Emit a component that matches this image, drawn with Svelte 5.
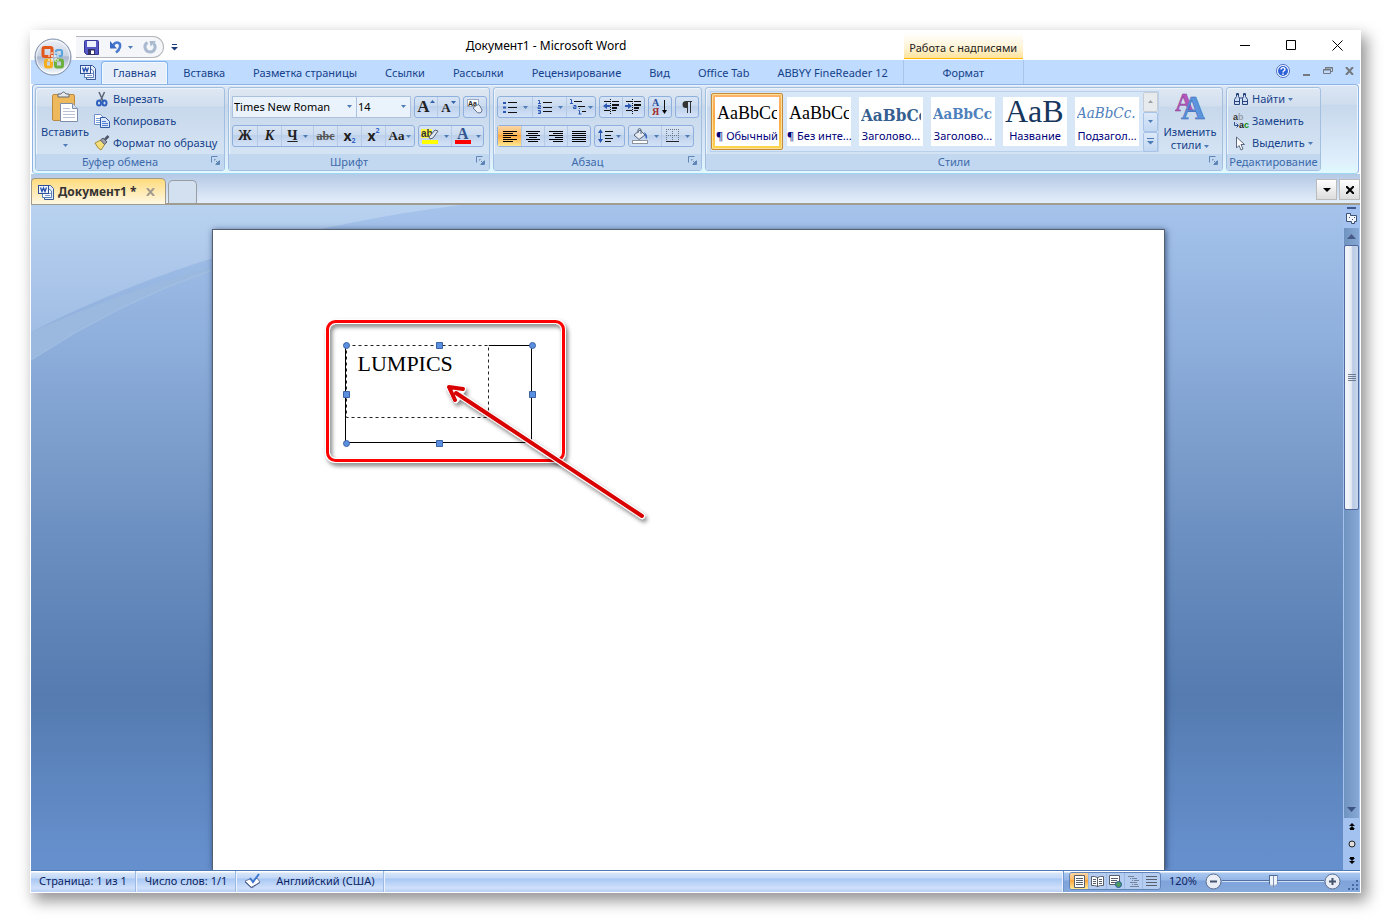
<script lang="ts">
	type Style = { name: string; sample: string; kind: string };

	const tabs = [
		'Главная',
		'Вставка',
		'Разметка страницы',
		'Ссылки',
		'Рассылки',
		'Рецензирование',
		'Вид',
		'Office Tab',
		'ABBYY FineReader 12'
	];

	const styles: Style[] = [
		{ name: '¶ Обычный', sample: 'AaBbCс', kind: 'normal' },
		{ name: '¶ Без инте...', sample: 'AaBbCс', kind: 'normal' },
		{ name: 'Заголово...', sample: 'AaBbCc', kind: 'h1' },
		{ name: 'Заголово...', sample: 'AaBbCc', kind: 'h2' },
		{ name: 'Название', sample: 'AaB', kind: 'title' },
		{ name: 'Подзагол...', sample: 'AaBbCc.', kind: 'sub' }
	];

	const views = ['Разметка', 'Чтение', 'Веб-документ', 'Структура', 'Черновик'];
	const aligns = ['left', 'center', 'right', 'justify'];

	let activeTab = $state('Главная');
	let activeStyle = $state(0);
	let align = $state('left');
	let view = $state(0);
	let zoom = $state(50);

	const alignPath = (kind: string) => {
		const widths = kind == 'justify' ? [14, 14, 14, 14, 14, 14] : [14, 10, 14, 8, 14, 10];
		return widths
			.map((w, i) => {
				const x = kind == 'right' ? 15 - w : kind == 'center' ? 8 - w / 2 : 1;
				return `M${x} ${2.5 + i * 2}h${w}`;
			})
			.join('');
	};
</script>

{#snippet arrow()}
	<svg class="arrow" width="5" height="3" viewBox="0 0 5 3"><path d="M0 0h5L2.5 3z" /></svg>
{/snippet}

{#snippet launcher()}
	<button class="launcher" aria-label="Параметры">
		<svg width="9" height="9" viewBox="0 0 9 9" fill="none" stroke="#5f86b5">
			<path d="M.5 6.500V.5h6" />
			<path d="M3.500 4.500v-1h1M5 5l3 3M8.500 4.500v4h-4" />
			<path d="M8 5v3H5z" fill="#5f86b5" />
		</svg>
	</button>
{/snippet}

{#snippet wordIcon()}
	<svg width="16" height="16" viewBox="0 0 16 16">
		<path d="M6.500 1.500h6l3 3v11h-9z" fill="#e3ecfa" stroke="#3a5a97" />
		<path d="M4.500 4.500h6l3 2.500v6.500h-9z" fill="#f7faff" stroke="#5b7db8" />
		<path d="M11 9.500h2M7 11.500h5" stroke="#7a98ca" />
		<rect x=".5" y="1.500" width="10" height="8" fill="#eef3fc" stroke="#2c4f96" />
		<path d="M2.500 3.500l1.500 4 1.500-3.500 1.500 3.500 1.500-4" fill="none" stroke="#2450ad" stroke-width="1.300" />
	</svg>
{/snippet}

<div class="desktop">
	<div class="window">
		<header class="titlebar">
			<div class="qat">
				<button aria-label="Сохранить">
					<svg width="15" height="15" viewBox="0 0 15 15">
						<path d="M.5 1.500q0-1 1-1h12q1 0 1 1v13H2.500l-2-2z" fill="#5558c4" stroke="#363796" />
						<path d="M3 1h9v6H3z" fill="#edf1fb" />
						<path d="M4 9h7v6H4z" fill="#303063" />
						<path d="M7 10.500h3V14H7z" fill="#fff" />
					</svg>
				</button>
				<button class="undo" aria-label="Отменить">
					<svg width="14" height="14" viewBox="0 0 14 14">
						<path d="M4 5.500C7 1 12 2 11 7c-.5 2.500-2 4-4 5.500" fill="none" stroke="#4879cf" stroke-width="2.500" />
						<path d="M1 1v7.500h7z" fill="#3c6bc4" />
					</svg>
					{@render arrow()}
				</button>
				<button aria-label="Повторить">
					<svg width="14" height="14" viewBox="0 0 14 14">
						<path d="M4.500 2.500C0 5 2 12 7 12s6.500-6 3.500-8.500" fill="none" stroke="#a9b9cf" stroke-width="3" />
						<path d="M6.500 1H13L7.500 6.500z" fill="#a9b9cf" />
					</svg>
				</button>
			</div>
			<button class="qat-more" aria-label="Настройка панели">
				<svg width="7" height="7" viewBox="0 0 7 7"><path d="M1 0h5v1H1zM0 3h7L3.500 6.500z" fill="#1f3e7d" /></svg>
			</button>
			<h1>Документ1 - Microsoft Word</h1>
			<div class="controls">
				<button aria-label="Свернуть">
					<svg width="11" height="11" viewBox="0 0 11 11"><path d="M0 5.500h10" stroke="#000" /></svg>
				</button>
				<button aria-label="Развернуть">
					<svg width="11" height="11" viewBox="0 0 11 11"><path d="M.5.5h9v9h-9z" fill="none" stroke="#000" /></svg>
				</button>
				<button aria-label="Закрыть">
					<svg width="11" height="11" viewBox="0 0 11 11"><path d="M.5.5l10 10M10.500.5l-10 10" stroke="#000" /></svg>
				</button>
			</div>
			<button class="office" aria-label="Office">
				<svg width="38" height="38" viewBox="0 0 38 38">
					<defs>
						<linearGradient id="orb" x2="0" y2="1">
							<stop offset="0" stop-color="#eef1f7" />
							<stop offset=".47" stop-color="#c9d2e2" />
							<stop offset=".5" stop-color="#a9b6cf" />
							<stop offset="1" stop-color="#fafdff" />
						</linearGradient>
					</defs>
					<circle cx="19" cy="19" r="18" fill="url(#orb)" stroke="#7e8da9" />
					<circle cx="19" cy="19" r="16.500" fill="none" stroke="#fff" opacity=".7" />
					<g fill="none" stroke-width="3">
						<rect x="9" y="9.500" width="9" height="9" rx="1.500" stroke="#e2571b" />
						<rect x="22" y="12" width="6" height="6" rx="1.500" stroke="#5aa5dc" stroke-width="2.200" />
						<rect x="11.500" y="22" width="6" height="7" rx="1.500" stroke="#f5ae1e" />
						<rect x="21.500" y="22" width="7" height="7" rx="1.500" stroke="#6cb13f" />
					</g>
					<path d="M18 14v10M22 14v10M14 18h12M14 22h12" stroke="#fff" stroke-dasharray="2 1" />
				</svg>
			</button>
		</header>

		<nav class="tabs">
			<button class="word" aria-label="Word">{@render wordIcon()}</button>
			{#each tabs as tab}
				<button class="tab" class:active={tab == activeTab} onclick={() => (activeTab = tab)}>{tab}</button>
			{/each}
			<div class="context">
				<span class="context-title">Работа с надписями</span>
				<button class="context-tab">Формат</button>
			</div>
			<div class="doc-controls">
				<button aria-label="Справка">
					<svg width="14" height="14" viewBox="0 0 14 14">
						<circle cx="7" cy="7" r="6.500" fill="#fff" stroke="#4b6fc0" />
						<circle cx="7" cy="7" r="5" fill="#2c61d8" />
						<path d="M5 5.500c0-2.500 4-2.500 4 0C9 7 7 6.500 7 8.500M7 9.500v1.500" fill="none" stroke="#fff" stroke-width="1.400" />
					</svg>
				</button>
				<button aria-label="Свернуть окно">
					<svg width="9" height="10" viewBox="0 0 9 10"><path d="M1 9h7" stroke="#75787d" stroke-width="2" /></svg>
				</button>
				<button aria-label="Восстановить окно">
					<svg width="10" height="8" viewBox="0 0 10 8" fill="none" stroke="#75787d">
						<path d="M2.500 3V.5h7v4H7.500M2 1h8" /><path d="M.5 2.500h7v4h-7zM0 3h8" />
					</svg>
				</button>
				<button aria-label="Закрыть документ">
					<svg width="9" height="8" viewBox="0 0 9 8"><path d="M1 0l7 8M8 0L1 8" stroke="#75787d" stroke-width="2" /></svg>
				</button>
			</div>
		</nav>

		<div class="ribbon">
			<section class="group clipboard">
				<div class="body">
					<button class="big">
						<svg width="28" height="32" viewBox="0 0 28 32">
							<rect x="1.500" y="3.500" width="22" height="26" rx="1.500" fill="#eeb95c" stroke="#bd8b3e" />
							<path d="M7 6V3h3q2.500-4 5 0h3v3z" fill="#e4e7ec" stroke="#636973" />
							<path d="M9.500 12.500h12l5 5v13h-17z" fill="#fff" stroke="#7d8eaa" />
							<path d="M21.500 12.500v5h5" fill="#d5deeb" stroke="#7d8eaa" />
							<path d="M12 17.500h7M12 20.500h12M12 23.500h12M12 26.500h12" stroke="#b9c3d3" />
						</svg>
						<span>Вставить</span>
						{@render arrow()}
					</button>
					<div class="list">
						<button>
							<svg width="16" height="16" viewBox="0 0 16 16" fill="none">
								<path d="M5 1l4.500 10M10.500 1L6 11" stroke="#5b6576" stroke-width="1.500" />
								<ellipse cx="5" cy="12" rx="2" ry="2.500" stroke="#2d5fbd" stroke-width="2" />
								<ellipse cx="10.500" cy="12" rx="2" ry="2.500" stroke="#2d5fbd" stroke-width="2" />
							</svg>
							Вырезать
						</button>
						<button>
							<svg width="16" height="16" viewBox="0 0 16 16">
								<path d="M.5 1.500h6l3 3v7h-9z" fill="#fff" stroke="#6c8fc9" />
								<path d="M2 5.500h4M2 7.500h4M2 9.500h4" stroke="#7b9fd8" />
								<path d="M6.500 4.500h5l4 4v6h-9z" fill="#dbe7fa" stroke="#2e59a5" />
								<path d="M8 8.500h4M8 10.500h6M8 12.500h6" stroke="#4b7bd0" />
							</svg>
							Копировать
						</button>
						<button>
							<svg width="16" height="16" viewBox="0 0 16 16">
								<path d="M1 8l6-3 4 4-4 6q-3-1-6-7z" fill="#f4de7c" stroke="#a48a36" />
								<path d="M6.500 5L9 3l4 4-2.500 2.500z" fill="#9a9eac" stroke="#5a5e6c" />
								<path d="M11 4.500l3.500-3.500" stroke="#4e5568" stroke-width="2.500" />
							</svg>
							Формат по образцу
						</button>
					</div>
				</div>
				<h2>Буфер обмена{@render launcher()}</h2>
			</section>

			<section class="group font">
				<div class="body rows">
					<div class="row">
						<div class="combos">
							<label class="combo family">
								<select aria-label="Шрифт"><option>Times New Roman</option><option>Arial</option></select>
								{@render arrow()}
							</label>
							<label class="combo size">
								<select aria-label="Размер шрифта"><option>14</option><option>16</option></select>
								{@render arrow()}
							</label>
						</div>
						<div class="set">
							<button class="grow serif" aria-label="Увеличить размер">A<svg width="5" height="3"><path d="M0 3h5L2.500 0z" fill="#3161a8" /></svg></button>
							<button class="shrink serif" aria-label="Уменьшить размер">A<svg width="5" height="3"><path d="M0 0h5L2.500 3z" fill="#3161a8" /></svg></button>
						</div>
						<div class="set">
							<button aria-label="Очистить формат">
								<svg width="18" height="18" viewBox="0 0 18 18">
									<rect x="1.500" y="1.500" width="11" height="7" fill="#fff" stroke="#9babc2" />
									<text x="2" y="8" font-size="7" font-weight="bold" font-family="Liberation Sans" fill="#222">Aa</text>
									<path d="M7 10l4-3q2-1 3 1l2 4q0 3-3 3-2 0-3-2z" fill="#eef2f8" stroke="#68788f" />
								</svg>
							</button>
						</div>
					</div>
					<div class="row lower">
						<div class="set">
							<button class="serif bold">Ж</button>
							<button class="serif bold italic">К</button>
							<button class="serif bold wide"><u>Ч</u>{@render arrow()}</button>
							<button class="serif strike"><s>abc</s></button>
							<button class="bold">x<sub>2</sub></button>
							<button class="bold">x<sup>2</sup></button>
							<button class="serif bold mid case">Aa{@render arrow()}</button>
						</div>
						<div class="set">
							<button class="wide" aria-label="Цвет выделения">
								<svg width="18" height="17" viewBox="0 0 18 17">
									<path d="M0 1h11v9H0z" fill="#fbf63f" />
									<text x="0" y="9" font-size="10" font-weight="bold" font-family="Liberation Sans" fill="#333">ab</text>
									<path d="M8 9l6-7 3 1-5 7-3 1z" fill="#dfe6ef" stroke="#53617b" />
									<path d="M1 12h16v4H1z" fill="#ff0" />
								</svg>
								{@render arrow()}
							</button>
							<button class="wide" aria-label="Цвет текста">
								<svg width="16" height="17" viewBox="0 0 16 17">
									<text x="2" y="11" font-size="16" font-weight="bold" font-family="Liberation Serif" fill="#31558f">A</text>
									<path d="M0 12h16v4H0z" fill="red" />
								</svg>
								{@render arrow()}
							</button>
						</div>
					</div>
				</div>
				<h2>Шрифт{@render launcher()}</h2>
			</section>

			<section class="group para">
				<div class="body rows">
					<div class="row">
						<div class="set lists">
							<button class="wide" aria-label="Маркеры">
								<svg width="15" height="15" viewBox="0 0 15 15">
									<path d="M5 2.500h9M5 7.500h9M5 12.500h9" stroke="#111" />
									<path d="M0 2h3v2H0zM0 6.500h3v2H0zM0 11h3v2H0z" fill="#2c58b4" />
								</svg>
								{@render arrow()}
							</button>
							<button class="wide" aria-label="Нумерация">
								<svg width="16" height="16" viewBox="0 0 16 16">
									<path d="M6 3.500h9M6 8.500h9M6 12.500h9" stroke="#111" />
									<path d="M1 1.500h1.500V4M1 4.500h3M1 6.500h2.500v1.500H1v1.500h3M1 11.500h2.500v3H1M1.500 13h2" fill="none" stroke="#2c58b4" />
								</svg>
								{@render arrow()}
							</button>
							<button class="mid" aria-label="Многоуровневый список">
								<svg width="17" height="16" viewBox="0 0 17 16">
									<path d="M5 2.500h8M9 7.500h7M13 12.500h4" stroke="#111" />
									<path d="M1 .5h1.500V4M1 4.500h3M4.500 6.500h2.500v3H4.500V8h2.500M10.500 9v1M9.500 11.500h1V15M9.500 15h3" fill="none" stroke="#2c58b4" />
								</svg>
								{@render arrow()}
							</button>
						</div>
						<div class="set">
							<button aria-label="Уменьшить отступ">
								<svg width="17" height="16" viewBox="0 0 17 16">
									<path d="M1 2.500h6M9 2.500h7M1 11.500h6M9 11.500h4" stroke="#111" />
									<path d="M9 5h7v2H9zM9 8h5v2H9z" fill="#111" />
									<path d="M7.500 0v16" stroke="#111" stroke-dasharray="1 1" />
									<path d="M0 7l4-3v2h3v2H4v2z" fill="#2c58b4" />
								</svg>
							</button>
							<button aria-label="Увеличить отступ">
								<svg width="17" height="16" viewBox="0 0 17 16">
									<path d="M1 2.500h6M9 2.500h7M1 11.500h6M9 11.500h4" stroke="#111" />
									<path d="M9 5h7v2H9zM9 8h5v2H9z" fill="#111" />
									<path d="M7.500 0v16" stroke="#111" stroke-dasharray="1 1" />
									<path d="M7 7L3 4v2H0v2h3v2z" fill="#2c58b4" />
								</svg>
							</button>
						</div>
						<div class="set">
							<button aria-label="Сортировка">
								<svg width="16" height="18" viewBox="0 0 16 18">
									<text x="0" y="8" font-size="10" font-weight="bold" font-family="Liberation Serif" fill="#2c4f9c">А</text>
									<text x="0" y="17" font-size="10" font-weight="bold" font-family="Liberation Serif" fill="#a02c2c">Я</text>
									<path d="M12.500 2v12" stroke="#111" /><path d="M10 12h5l-2.500 4z" />
								</svg>
							</button>
						</div>
						<div class="set">
							<button aria-label="Знаки абзаца">
								<svg width="12" height="14" viewBox="0 0 12 14">
									<path d="M11 1H5a3.500 3.500 0 0 0 0 7h1V1z" fill="#333" /><path d="M6.500 1v12M9.500 1v12M5 1.500h6" stroke="#333" />
								</svg>
							</button>
						</div>
					</div>
					<div class="row lower">
						<div class="set">
							{#each aligns as kind}
								<button class:pressed={align == kind} aria-label={kind} onclick={() => (align = kind)}>
									<svg width="16" height="15" viewBox="0 0 16 15"><path d={alignPath(kind)} stroke="#000" /></svg>
								</button>
							{/each}
						</div>
						<div class="set">
							<button class="mid" aria-label="Интервал">
								<svg width="16" height="16" viewBox="0 0 16 16">
									<path d="M7 3.500h8M7 7.500h6M7 10.500h8M7 13.500h6" stroke="#111" />
									<path d="M2.500 3v10" stroke="#2c58b4" /><path d="M0 5l2.500-4L5 5zM0 11l2.500 4L5 11z" fill="#2c58b4" />
								</svg>
								{@render arrow()}
							</button>
						</div>
						<div class="set">
							<button class="wide" aria-label="Заливка">
								<svg width="17" height="17" viewBox="0 0 17 17">
									<path d="M2 7l6-5 5 5-6 4.500z" fill="#e6ebf2" stroke="#55627b" /><path d="M6 5V1.500q1.500-2 3 0V6" fill="none" stroke="#55627b" />
									<path d="M12 4q4 2 3 7-2-1-2-4z" fill="#3a6ac4" />
									<rect x=".5" y="12.500" width="15" height="3" fill="#fff" stroke="#8c949e" />
								</svg>
								{@render arrow()}
							</button>
							<button class="wide" aria-label="Границы">
								<svg width="14" height="14" viewBox="0 0 14 14">
									<path d="M0 .5h13M0 6.500h13M.5 0v12M6.500 0v12M12.500 0v12" stroke="#6b7484" stroke-dasharray="1 1" />
									<path d="M0 12.500h13" stroke="#222" />
								</svg>
								{@render arrow()}
							</button>
						</div>
					</div>
				</div>
				<h2>Абзац{@render launcher()}</h2>
			</section>

			<section class="group styles">
				<div class="body">
					<div class="gallery">
						{#each styles as s, i}
							<button class="style" class:chosen={i == activeStyle} onclick={() => (activeStyle = i)}>
								<span class="tile"><span class="sample {s.kind}">{s.sample}</span><span class="name">{s.name}</span></span>
							</button>
						{/each}
						<div class="scroller">
							<button class="off" aria-label="Вверх"><svg width="5" height="3"><path d="M0 3h5L2.500 0z" fill="#a0a0a0" /></svg></button>
							<button aria-label="Вниз">{@render arrow()}</button>
							<button aria-label="Ещё"><svg width="7" height="7"><path d="M0 0h7v1H0zM0 3h7L3.500 6.500z" fill="#4e7cb6" /></svg></button>
						</div>
					</div>
					<button class="big change">
						<svg width="30" height="30" viewBox="0 0 30 30">
							<text x="0" y="20" font-size="26" font-weight="bold" font-family="Liberation Serif" fill="#b557bb" stroke="#883d93" stroke-width=".5">A</text>
							<text x="6" y="28" font-size="34" font-weight="bold" font-family="Liberation Serif" fill="#5d94de" stroke="#2d60ad" stroke-width=".5">A</text>
						</svg>
						<span>Изменить<br />стили {@render arrow()}</span>
					</button>
				</div>
				<h2>Стили{@render launcher()}</h2>
			</section>

			<section class="group editing">
				<div class="body">
					<div class="list">
						<button>
							<svg width="16" height="14" viewBox="0 0 16 14" fill="#cddcf3" stroke="#27437e">
								<path d="M3.500 1.500h2v3l1 2v6h-5v-5l2-3zM10.500 1.500h2v3l2 3v5h-5v-6l1-2z" /><path d="M6 6h4M2 9.500h4M10 9.500h4M3 2.500h3M10 2.500h3" />
							</svg>
							Найти {@render arrow()}
						</button>
						<button>
							<svg width="16" height="16" viewBox="0 0 16 16" font-family="Liberation Sans" font-weight="bold" font-size="9">
								<text x="0" y="7" fill="#333">a<tspan fill="#9aa0aa">b</tspan></text>
								<text x="6" y="15" fill="#222">a<tspan fill="#139013">c</tspan></text>
								<path d="M1.500 9v3.500H5M3.500 10.500l2 2-2 2" fill="none" stroke="#2d4f91" />
							</svg>
							Заменить
						</button>
						<button>
							<svg width="16" height="15" viewBox="0 0 16 15"><path d="M3.500 1v11l2.500-2.500 2 4.500 2-1-2-4.500h3.500z" fill="#fff" stroke="#596880" /></svg>
							Выделить {@render arrow()}
						</button>
					</div>
				</div>
				<h2>Редактирование</h2>
			</section>
		</div>

		<div class="doctabs">
			<div class="doctab">
				{@render wordIcon()}
				<b>Документ1 *</b>
				<button aria-label="Закрыть вкладку"><svg width="9" height="8" viewBox="0 0 9 8"><path d="M1 0l7 8M8 0L1 8" stroke="#a39b8f" stroke-width="2" /></svg></button>
			</div>
			<button class="newtab" aria-label="Новая вкладка"></button>
			<div class="tabtools">
				<button aria-label="Список вкладок"><svg width="8" height="4"><path d="M0 0h8L4 4z" /></svg></button>
				<button aria-label="Закрыть"><svg width="8" height="8" viewBox="0 0 8 8"><path d="M0 0l8 8M8 0L0 8" stroke="#000" stroke-width="2" /></svg></button>
			</div>
		</div>

		<main class="workspace">
			<svg class="swoosh" width="430" height="170" viewBox="0 0 430 170">
				<defs>
					<linearGradient id="sky" x2="0" y2="1">
						<stop offset="0" stop-color="#b9d2f0" />
						<stop offset="1" stop-color="#a0bde4" />
					</linearGradient>
				</defs>
				<path d="M0 0h430Q190 30 0 127z" fill="url(#sky)" />
				<path d="M0 127Q90 87 181 62v5Q90 96 0 155z" fill="#9bb9df" />
				<path d="M0 155Q90 96 181 65" fill="none" stroke="#a5c0e5" />
			</svg>
			<div class="canvas">
				<article class="page">
					<p class="text">LUMPICS</p>
					<svg class="marks" width="350" height="220" viewBox="310 310 350 220">
						<defs>
							<filter id="drop" x="-10%" y="-10%" width="125%" height="130%">
								<feDropShadow dx="2" dy="3" stdDeviation="2" flood-opacity=".5" />
							</filter>
						</defs>
						<path d="M345.500 345.500h186v97h-186z" fill="none" stroke="#000" />
						<path d="M346.500 345.500h142v72h-142z" fill="none" stroke="#fff" />
						<path d="M345.500 345v98" stroke="#000" />
						<path d="M346.500 345.500h142v72h-142z" fill="none" stroke="#222" stroke-dasharray="3 3" />
						<g fill="#5b8fe0" stroke="#3c64a4">
							<circle cx="346.500" cy="345.500" r="3" /><circle cx="532.500" cy="345.500" r="3" /><circle cx="346.500" cy="443.500" r="3" />
							<path d="M436.500 342.500h6v6h-6zM343.500 391.500h6v6h-6zM529.500 391.500h6v6h-6zM436.500 440.500h6v6h-6z" />
						</g>
						<g fill="none" stroke-linecap="round" stroke-linejoin="round">
							<g filter="url(#drop)">
								<rect x="327.500" y="321.500" width="236" height="139" rx="8" stroke="#fff" stroke-width="5" />
								<rect x="327.500" y="321.500" width="236" height="139" rx="8" stroke="#f00" stroke-width="3" />
							</g>
							<g filter="url(#drop)">
								<path d="M642 516L456 393M456 400l-7-13 14 2z" stroke="#fff" stroke-width="6" />
								<path d="M642 516L456 393M455 400l-6-13 14 2" stroke="#d90000" stroke-width="4" />
							</g>
						</g>
					</svg>
				</article>
			</div>
			<aside class="scrollbar">
				<button class="split" aria-label="Разделить"></button>
				<button class="ruler" aria-label="Линейка">
					<svg width="13" height="13" viewBox="0 0 13 13" fill="#f2f5fa" stroke="#3d5174"><path d="M1.500 1.500h4v2h6v6h-2v2h-3v-2h-5z" /><path d="M4 5.500h1M7 7.500h1M9 5.500h1" /></svg>
				</button>
				<div class="track">
					<button aria-label="Вверх"><svg width="9" height="5"><path d="M0 5h9L4.500 0z" fill="#4a5a86" /></svg></button>
					<div class="thumb"><i></i></div>
					<button class="down" aria-label="Вниз"><svg width="9" height="5"><path d="M0 0h9L4.500 5z" fill="#3d5384" /></svg></button>
				</div>
				<button aria-label="Предыдущая страница"><svg width="6" height="7"><path d="M0 3h6L3 0zM0 6h6L3 3zM1 6h4v1H1z" /></svg></button>
				<button aria-label="Объект перехода"><svg width="8" height="8"><circle cx="4" cy="4" r="3" fill="#ddd" stroke="#222" /></svg></button>
				<button aria-label="Следующая страница"><svg width="6" height="7"><path d="M0 1h6L3 4zM0 4h6L3 7zM1 0h4v1H1z" /></svg></button>
			</aside>
		</main>

		<footer class="status">
			<button>Страница: 1 из 1</button>
			<button class="words">Число слов: 1/1</button>
			<button class="lang">
				<svg width="17" height="16" viewBox="0 0 17 16">
					<path d="M1 8l5-2 3 2 4-3 3 4-8 6z" fill="#fff" stroke="#6577a2" /><path d="M1 9l6 5.500 9-5" fill="none" stroke="#4b5f94" />
					<path d="M6 5l3 4 6-8" fill="none" stroke="#4077cf" stroke-width="2" />
				</svg>
				Английский (США)
			</button>
			<div class="right">
				<div class="views">
					{#each views as v, i}
						<button class:pressed={view == i} aria-label={v} onclick={() => (view = i)}>
							<svg width="13" height="13" viewBox="0 0 13 13" fill="none" stroke="#59606d">
								{#if i == 0}
									<path d="M1.500.5h10v12h-10z" fill="#fff" /><path d="M3 3.500h7M3 5.500h7M3 7.500h7M3 9.500h7" />
								{:else if i == 1}
									<path d="M.5 1.500h3l3 1 3-1h3v9h-3l-3 1-3-1h-3zM6.500 2v10" fill="#fff" /><path d="M2 4.500h3M2 6.500h3M2 8.500h3M8 4.500h3M8 6.500h3M8 8.500h3" />
								{:else if i == 2}
									<path d="M.5.5h10v9H.5z" fill="#fff" /><path d="M2 3.500h7M2 5.500h6M2 7.500h5" /><circle cx="9.500" cy="9.500" r="3" fill="#4f9b60" stroke="#245b9b" />
								{:else if i == 3}
									<path d="M1 1.500h6M3 3.500h1M5 3.500h5M5 5.500h1M7 5.500h5M3 7.500h7M5 9.500h1M7 9.500h4M3 11.500h9" stroke="#76849d" />
								{:else}
									<path d="M1 1.500h11M1 4.500h11M1 7.500h11M1 10.500h11" />
								{/if}
							</svg>
						</button>
					{/each}
				</div>
				<button class="percent">120%</button>
				<button class="round" aria-label="Уменьшить"><svg width="17" height="17"><circle cx="8.500" cy="8.500" r="7.500" fill="#e9eef6" stroke="#5d6f8e" /><path d="M5 8.500h7" stroke="#44536d" stroke-width="2" /></svg></button>
				<input type="range" aria-label="Масштаб" bind:value={zoom} />
				<button class="round" aria-label="Увеличить"><svg width="17" height="17"><circle cx="8.500" cy="8.500" r="7.500" fill="#e9eef6" stroke="#5d6f8e" /><path d="M5 8.500h7M8.500 5v7" stroke="#44536d" stroke-width="2" /></svg></button>
				<svg class="grip" width="11" height="11"><path d="M8 0h2v2H8zM4 4h2v2H4zM8 4h2v2H8zM0 8h2v2H0zM4 8h2v2H4zM8 8h2v2H8z" fill="#4468a6" /></svg>
			</div>
		</footer>
	</div>
</div>

<style>
	:global(body) {
		margin: 0;
		background: #fff;
	}
	.desktop {
		box-sizing: border-box;
		height: 100vh;
		min-height: 600px;
		padding: 30px;
		font: 11px/14px 'Noto Sans', 'Open Sans', sans-serif;
		color: #15428b;
		overflow: hidden;
	}
	.desktop * {
		box-sizing: border-box;
	}
	button {
		display: flex;
		align-items: center;
		justify-content: center;
		padding: 0;
		border: 0;
		background: none;
		font: inherit;
		color: inherit;
		white-space: nowrap;
	}
	svg {
		flex: none;
		display: block;
	}
	.arrow {
		fill: #4e7cb6;
	}
	.serif {
		font-family: 'Liberation Serif', serif;
	}
	.window {
		display: flex;
		flex-direction: column;
		height: 100%;
		border: solid #fff;
		border-width: 0 1px 1px;
		box-shadow: 5px 7px 14px 1px rgba(0, 0, 0, 0.42);
	}

	/* title bar */
	.titlebar {
		position: relative;
		display: flex;
		align-items: center;
		height: 30px;
		flex: none;
		background: #fff;
		color: #000;
	}
	.qat {
		display: flex;
		align-items: center;
		gap: 10px;
		width: 88px;
		height: 22px;
		margin: 4px 0 0 45px;
		padding-left: 8px;
		border: 1px solid #b4b6bb;
		border-left: 0;
		border-radius: 0 11px 11px 0;
		background: #f5f6f9;
	}
	.undo {
		gap: 5px;
	}
	.qat-more {
		margin: 4px 0 0 7px;
	}
	.titlebar h1 {
		flex: 1;
		margin: 0;
		padding: 2px 326px 0 0;
		text-align: center;
		font-size: 12px;
		font-weight: 400;
		line-height: 16px;
	}
	.controls {
		display: flex;
		gap: 35px;
		padding-right: 17px;
	}
	.office {
		position: absolute;
		left: 3px;
		top: 8px;
		z-index: 2;
	}

	/* ribbon tabs */
	.tabs {
		display: flex;
		height: 24px;
		flex: none;
		padding-left: 49px;
		background: #bfdbff;
	}
	.word {
		padding-right: 5px;
	}
	.tab {
		margin: 1px 2px 0 0;
		padding: 0 13px;
	}
	.tab.active {
		padding: 0 11px;
		margin-right: 2px;
		border: 1px solid #7fb1ee;
		border-bottom: 0;
		border-radius: 4px 4px 0 0;
		background: #e6eefa;
		box-shadow: inset 0 0 0 1px #f2f8ff;
	}
	.context {
		position: relative;
		display: flex;
		width: 121px;
		padding-top: 1px;
		border: 1px solid #a8c4e8;
		border-width: 0 1px;
	}
	.context-title {
		position: absolute;
		left: 0;
		right: 0;
		bottom: 25px;
		height: 26px;
		border-bottom: 1px solid #ffb700;
		background: linear-gradient(#fff, #fff3d3 60%, #ffe39a);
		text-align: center;
		line-height: 30px;
		color: #222;
		white-space: nowrap;
	}
	.context-tab {
		flex: 1;
	}
	.doc-controls {
		display: flex;
		align-items: flex-start;
		gap: 12px;
		margin: 4px 6px 0 auto;
	}
	.doc-controls button {
		height: 14px;
	}

	/* ribbon */
	.ribbon {
		display: flex;
		gap: 3px;
		height: 90px;
		flex: none;
		margin: 0 1px;
		padding: 2px;
		border: 1px solid #8db2e3;
		border-bottom-color: #9ad9f2;
		border-radius: 4px;
		background: linear-gradient(#dbe6f4, #cfdded 22%, #c7d8ec 23%, #dfeefb 85%, #dffaff);
		box-shadow: inset 0 0 0 1px #e9f4fe;
	}
	.ribbon,
	.tabs {
		min-width: 1290px;
	}
	.group {
		display: flex;
		flex-direction: column;
		border: 1px solid #a3bfe0;
		border-radius: 3px;
		background: linear-gradient(#dfe8f4, #d2dfee 22%, #c8d8ec 23%, #d9e8f6);
		box-shadow: inset 1px 1px 0 #ebf3fb;
		overflow: hidden;
	}
	.clipboard {
		width: 190px;
	}
	.font {
		width: 262px;
	}
	.para {
		width: 209px;
	}
	.styles {
		width: 518px;
	}
	.editing {
		width: 95px;
	}
	.body {
		display: flex;
		flex: 1;
		min-height: 0;
	}
	.group h2 {
		position: relative;
		margin: 0;
		height: 16px;
		padding-right: 20px;
		background: #c1d8f0;
		text-align: center;
		font-size: 11px;
		font-weight: 400;
		line-height: 16px;
		color: #3e6aaa;
	}
	.group.editing h2 {
		padding: 0;
	}
	.launcher {
		position: absolute;
		right: 4px;
		top: 2px;
	}
	.big {
		flex-direction: column;
		justify-content: flex-start;
		gap: 2px;
		width: 54px;
		padding-top: 3px;
	}
	.clipboard .big {
		margin-left: 2px;
	}
	.big .arrow {
		margin-top: 3px;
	}
	.list {
		display: flex;
		flex-direction: column;
		padding-left: 2px;
	}
	.list button {
		justify-content: flex-start;
		gap: 3px;
		height: 22px;
	}
	.editing .list {
		padding-left: 6px;
	}
	.rows {
		flex-direction: column;
		gap: 7px;
		padding: 8px 3px 0;
	}
	.row {
		display: flex;
		gap: 3px;
		height: 22px;
	}
	.combos {
		display: flex;
		width: 179px;
		height: 22px;
	}
	.combo {
		position: relative;
		display: flex;
		border: 1px solid #abc1de;
		background: #eaf2fb;
	}
	.combo + .combo {
		margin-left: -1px;
	}
	.family {
		width: 125px;
	}
	.size {
		width: 55px;
	}
	.combo select {
		flex: 1;
		width: 100%;
		padding: 0 1px;
		border: 0;
		appearance: none;
		background: none;
		font: inherit;
		color: #000;
	}
	.combo .arrow {
		position: absolute;
		right: 4px;
		top: 8px;
	}
	.set {
		display: flex;
		border: 1px solid #8fb0dc;
		border-radius: 3px;
		background: linear-gradient(#d7e4f4, #cbdbf0 45%, #bdd0ea 46%, #d3e2f8);
		color: #222;
	}
	.set button {
		width: 22px;
		font-size: 14px;
	}
	.lower .set button {
		width: 24px;
	}
	.para .lower .set button {
		width: 23px;
	}
	.set button + button {
		border-left: 1px solid #b5cae6;
	}
	.row .set button.wide {
		width: 32px;
		gap: 5px;
	}
	.row .lists button.wide {
		width: 34px;
	}
	.row .set button.mid {
		width: 29px;
		gap: 2px;
	}
	.set button.case {
		font-size: 13px;
	}
	.set button.strike {
		font-size: 12px;
		font-weight: 700;
		color: #555;
	}
	.set .grow,
	.set .shrink {
		align-items: flex-start;
		padding-top: 3px;
		font-size: 17px;
		font-weight: 700;
	}
	.set .shrink {
		padding-top: 4px;
		font-size: 13px;
	}
	.bold {
		font-weight: 700;
	}
	.italic {
		font-style: italic;
	}
	sub,
	sup {
		align-self: flex-end;
		font-size: 7px;
		line-height: 10px;
		color: #3161c8;
	}
	sup {
		align-self: flex-start;
	}
	.pressed {
		background: linear-gradient(#fbd6a5, #ffb85d 45%, #fda63c 46%, #ffe893);
	}

	/* style gallery */
	.gallery {
		display: flex;
		align-items: center;
		width: 449px;
		height: 61px;
		margin: 3px 0 0 4px;
		border: 1px solid #b9d0ed;
		background: #d7e7f8;
	}
	.style {
		width: 72px;
		height: 57px;
		border: 4px solid transparent;
	}
	.style.chosen {
		border: 1px solid #c58a38;
		border-radius: 2px;
		background: linear-gradient(#fbb56b, #fca744 40%, #fed54f);
		box-shadow: inset 0 0 0 1px #fbe19b;
	}
	.tile {
		display: flex;
		flex-direction: column;
		width: 64px;
		height: 49px;
		background: #fff;
		text-align: left;
	}
	.sample {
		height: 32px;
		margin: 0 2px;
		overflow: hidden;
		font: 18px/32px 'Liberation Serif', serif;
		color: #000;
	}
	.sample.h1,
	.sample.h2,
	.sample.sub {
		font-family: 'DejaVu Serif Condensed', 'DejaVu Serif', serif;
	}
	.sample.h1 {
		font-size: 17px;
		font-weight: 700;
		line-height: 36px;
		color: #365f91;
	}
	.sample.h2 {
		font-size: 15px;
		font-weight: 700;
		line-height: 34px;
		color: #4f81bd;
	}
	.sample.title {
		font-size: 32px;
		line-height: 28px;
		color: #17365d;
	}
	.sample.sub {
		font-size: 15px;
		font-style: italic;
		color: #4f81bd;
	}
	.name {
		color: #00007b;
		line-height: 14px;
		text-align: center;
	}
	.scroller {
		display: flex;
		flex-direction: column;
		width: 15px;
		height: 60px;
		margin-left: auto;
	}
	.scroller button {
		flex: 1;
		border: 1px solid #a9c3e6;
		border-radius: 2px;
		background: linear-gradient(#dce9f8, #c3d8f2);
	}
	.scroller .off {
		border-color: #c8cdd4;
		background: #e8ebee;
	}
	.change {
		margin-left: 4px;
		gap: 4px;
	}
	.change span {
		line-height: 13px;
	}
	.change .arrow {
		display: inline-block;
		margin: 0;
		vertical-align: middle;
	}

	/* document tabs */
	.doctabs {
		display: flex;
		align-items: flex-end;
		height: 31px;
		flex: none;
		border-bottom: 2px solid #a19c90;
		background: linear-gradient(#b4c9e6, #e4eefa);
	}
	.doctab {
		display: flex;
		align-items: center;
		gap: 4px;
		width: 135px;
		height: 26px;
		padding-left: 6px;
		margin-bottom: -1px;
		border: 1px solid #a39a86;
		border-bottom: 0;
		border-radius: 4px 5px 0 0;
		background: linear-gradient(#ffdb7c, #fff8e4);
		color: #333;
	}
	.doctab b {
		font-size: 12px;
	}
	.doctab button {
		margin-left: 6px;
	}
	.newtab {
		width: 29px;
		height: 23px;
		margin-left: 2px;
		border: 1px solid #9a9da2;
		border-bottom: 0;
		border-radius: 5px 5px 0 0;
		background: #d3e0f0;
	}
	.tabtools {
		display: flex;
		gap: 2px;
		margin: 0 0 3px auto;
	}
	.tabtools button {
		width: 21px;
		height: 21px;
		border: 1px solid #bbb;
		background: linear-gradient(#fff, #dcdcdc);
	}

	/* workspace */
	.workspace {
		position: relative;
		display: flex;
		flex: 1;
		min-height: 0;
		background: linear-gradient(#a5c3eb, #8fafdc 20%, #6b8fc0 50%, #557bb0 74%, #6690cd 98%);
	}
	.swoosh {
		position: absolute;
		left: 0;
		top: 0;
	}
	.canvas {
		position: relative;
		flex: 1;
		display: flex;
		justify-content: center;
		padding: 24px 0 0 2px;
		overflow: hidden;
	}
	.page {
		position: relative;
		flex: 0 1 953px;
		border: 1px solid #54606f;
		border-bottom: 0;
		background: #fff;
		box-shadow: 1px 1px 6px rgba(20, 40, 80, 0.7);
	}
	.text {
		position: absolute;
		left: 145px;
		top: 121px;
		margin: 0;
		font: 22px/26px 'Liberation Serif', serif;
		color: #000;
	}
	.marks {
		position: absolute;
		left: 97px;
		top: 80px;
	}
	.scrollbar {
		position: relative;
		display: flex;
		flex-direction: column;
		align-items: center;
		width: 17px;
		padding-bottom: 1px;
		background: #a4c2f0;
	}
	.scrollbar > button {
		height: 17px;
	}
	.scrollbar .split {
		width: 9px;
		height: 2px;
		margin-top: 2px;
		background: #41598e;
	}
	.scrollbar .ruler {
		height: 19px;
	}
	.track {
		flex: 1;
		display: flex;
		flex-direction: column;
		width: 15px;
		background: linear-gradient(90deg, #6f93c0, #87a8d4);
	}
	.track button {
		height: 17px;
	}
	.thumb {
		display: flex;
		align-items: center;
		justify-content: center;
		flex: 0 1 265px;
		border: 1px solid #51669a;
		border-radius: 2px;
		background: linear-gradient(90deg, #f0f3f8 30%, #dfe6f1 50%, #b9cae3 60%, #c9d8ec);
	}
	.thumb i {
		width: 8px;
		height: 7px;
		background: repeating-linear-gradient(#6d7c93 0 1px, transparent 1px 2px);
	}
	.down {
		margin-top: auto;
	}

	/* status bar */
	.status {
		display: flex;
		height: 22px;
		flex: none;
		border-top: 1px solid #4d78b8;
		background: linear-gradient(#fff 1px, #d5e4f8 2px, #c3d9f7 7px, #a9c8f4 8px, #cfe0fa 17px, #b6cff5);
		color: #0b2463;
	}
	.status > button {
		padding: 0 8px 2px;
		border-right: 1px solid #9cb9e4;
		box-shadow: 1px 0 0 #e8f1fd;
	}
	.status .words {
		padding-left: 9px;
	}
	.status .lang {
		gap: 15px;
	}
	.right {
		display: flex;
		align-items: center;
		margin-left: auto;
		padding: 0 1px 1px 5px;
		border-left: 1px solid #6f95cf;
		background: linear-gradient(#fff 1px, #a9c7f1 2px, #94b5e6 9px, #7ea3db 10px, #86a9dc);
		box-shadow: -1px 0 0 #e8f1fd;
	}
	.views {
		display: flex;
		height: 18px;
		border: 1px solid #6284b8;
		border-radius: 3px;
		background: #b5cdf0;
		overflow: hidden;
	}
	.views button {
		width: 18px;
	}
	.views button + button {
		border-left: 1px solid #9db9e2;
	}
	.percent {
		width: 44px;
	}
	.right input {
		appearance: none;
		width: 102px;
		height: 14px;
		margin: 0;
		background: linear-gradient(transparent 6px, #516f9f 6px 7px, #cfe0f7 7px 8px, transparent 8px);
	}
	.right input::-webkit-slider-thumb {
		appearance: none;
		width: 9px;
		height: 13px;
		background:
			linear-gradient(#526b96 1px, transparent 1px 9px, rgba(82, 107, 150, 0.7) 12px),
			linear-gradient(90deg, #526b96 1px, #eef3fa 1px 4px, #8397b8 4px 5px, #eef3fa 5px 8px, #526b96 8px);
		clip-path: polygon(0 0, 100% 0, 100% 70%, 50% 100%, 0 70%);
	}
	.grip {
		align-self: flex-end;
		margin-left: 7px;
	}
</style>
